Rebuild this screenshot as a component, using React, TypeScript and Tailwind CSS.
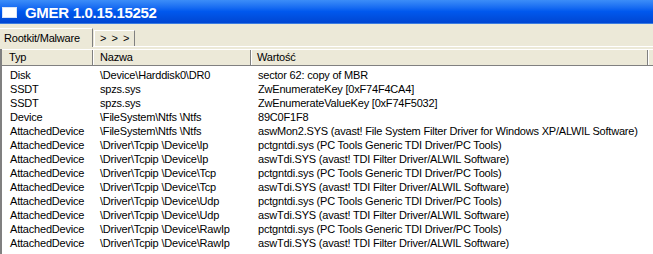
import React from "react";

const rows: [string, string, string][] = [
  ["Disk", "\\Device\\Harddisk0\\DR0", "sector 62: copy of MBR"],
  ["SSDT", "spzs.sys", "ZwEnumerateKey [0xF74F4CA4]"],
  ["SSDT", "spzs.sys", "ZwEnumerateValueKey [0xF74F5032]"],
  ["Device", "\\FileSystem\\Ntfs \\Ntfs", "89C0F1F8"],
  ["AttachedDevice", "\\FileSystem\\Ntfs \\Ntfs", "aswMon2.SYS (avast! File System Filter Driver for Windows XP/ALWIL Software)"],
  ["AttachedDevice", "\\Driver\\Tcpip \\Device\\Ip", "pctgntdi.sys (PC Tools Generic TDI Driver/PC Tools)"],
  ["AttachedDevice", "\\Driver\\Tcpip \\Device\\Ip", "aswTdi.SYS (avast! TDI Filter Driver/ALWIL Software)"],
  ["AttachedDevice", "\\Driver\\Tcpip \\Device\\Tcp", "pctgntdi.sys (PC Tools Generic TDI Driver/PC Tools)"],
  ["AttachedDevice", "\\Driver\\Tcpip \\Device\\Tcp", "aswTdi.SYS (avast! TDI Filter Driver/ALWIL Software)"],
  ["AttachedDevice", "\\Driver\\Tcpip \\Device\\Udp", "pctgntdi.sys (PC Tools Generic TDI Driver/PC Tools)"],
  ["AttachedDevice", "\\Driver\\Tcpip \\Device\\Udp", "aswTdi.SYS (avast! TDI Filter Driver/ALWIL Software)"],
  ["AttachedDevice", "\\Driver\\Tcpip \\Device\\RawIp", "pctgntdi.sys (PC Tools Generic TDI Driver/PC Tools)"],
  ["AttachedDevice", "\\Driver\\Tcpip \\Device\\RawIp", "aswTdi.SYS (avast! TDI Filter Driver/ALWIL Software)"],
];

export default function App() {
  return (
    <div
      className="w-[653px] h-[254px] overflow-hidden bg-[#ECE9D8] flex flex-col text-black"
      style={{ fontFamily: '"Liberation Sans", Arial, sans-serif' }}
    >
      {/* Title bar */}
      <div className="h-[24px] shrink-0 flex items-center bg-gradient-to-b from-[#3C8DF8] via-[#0058EE] to-[#0046D2] border-b border-[#3A7BE0]">
        <div className="ml-[2px] w-[15px] h-[11px] bg-white border border-[#D8E4F8] mt-[1px]" />
        <div className="ml-[8px] text-white font-bold text-[15px] tracking-[-0.3px] leading-none mt-[1px]">
          GMER 1.0.15.15252
        </div>
      </div>

      {/* Tab strip */}
      <div className="h-[25px] shrink-0 relative">
        <div className="absolute left-0 right-0 top-[22px] h-px bg-white" />
        <div className="flex items-end h-[23px] pt-[4px]">
          <div className="h-[19px] w-[93px] bg-[#ECE9D8] border-t border-white border-r border-r-[#808080] flex items-center pl-[4px] text-[11px] tracking-[-0.2px] relative z-10">
            Rootkit/Malware
          </div>
          <div className="h-[16px] w-[41px] ml-[1px] border-t border-l border-white border-r border-r-[#808080] flex items-center pl-[5px] text-[11px] tracking-[1px] mb-[1px]">
            {"> > >"}
          </div>
        </div>
      </div>

      {/* List view */}
      <div className="flex-1 bg-white border-l-2 border-l-[#808080] flex flex-col text-[11px] tracking-[-0.2px]">
        <div className="h-[17px] shrink-0 flex bg-[#ECE9D8] border-b border-[#808080] border-t border-t-white">
          <div className="w-[91px] pl-[7px] flex items-center border-r border-[#808080]">Typ</div>
          <div className="w-[158px] pl-[6px] flex items-center border-l border-white border-r border-r-[#808080]">Nazwa</div>
          <div className="w-[397px] pl-[5px] flex items-center border-l border-white border-r border-r-[#808080]">Wartość</div>
          <div className="flex-1 border-l border-white" />
        </div>
        <div className="pt-[2px]">
          {rows.map((r, i) => (
            <div key={i} className="h-[14px] flex items-center whitespace-nowrap leading-none">
              <div className="w-[92px] pl-[8px] shrink-0">{r[0]}</div>
              <div className="w-[158px] pl-[6px] shrink-0">{r[1]}</div>
              <div className="pl-[6px]">{r[2]}</div>
            </div>
          ))}
        </div>
      </div>
    </div>
  );
}
